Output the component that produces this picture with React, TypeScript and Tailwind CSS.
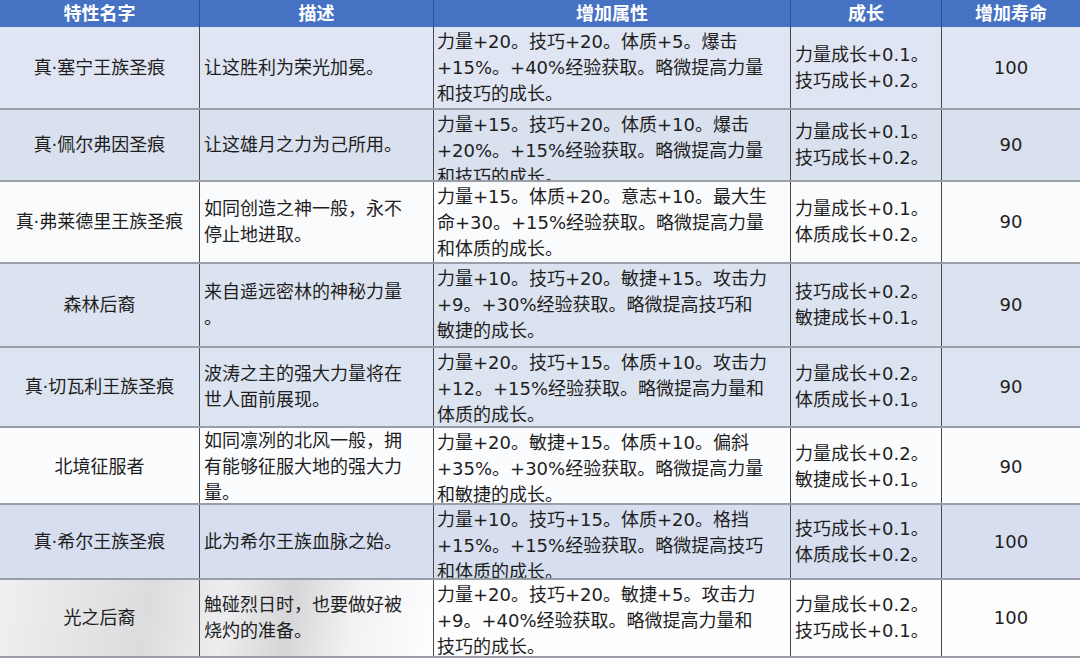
import React from 'react';

const rows = [
  {
    name: '真·塞宁王族圣痕',
    desc: ['让这胜利为荣光加冕。'],
    attrs: ['力量+20。技巧+20。体质+5。爆击', '+15%。+40%经验获取。略微提高力量', '和技巧的成长。'],
    growth: ['力量成长+0.1。', '技巧成长+0.2。'],
    life: '100',
    bg: 'bg-[#dfe5f2]',
    h: 'h-[83px]',
  },
  {
    name: '真·佩尔弗因圣痕',
    desc: ['让这雄月之力为己所用。'],
    attrs: ['力量+15。技巧+20。体质+10。爆击', '+20%。+15%经验获取。略微提高力量', '和技巧的成长。'],
    growth: ['力量成长+0.1。', '技巧成长+0.2。'],
    life: '90',
    bg: 'bg-[#d9e0ee]',
    h: 'h-[72px]',
  },
  {
    name: '真·弗莱德里王族圣痕',
    desc: ['如同创造之神一般，永不', '停止地进取。'],
    attrs: ['力量+15。体质+20。意志+10。最大生', '命+30。+15%经验获取。略微提高力量', '和体质的成长。'],
    growth: ['力量成长+0.1。', '体质成长+0.2。'],
    life: '90',
    bg: 'bg-[#fafbfd]',
    h: 'h-[82px]',
  },
  {
    name: '森林后裔',
    desc: ['来自遥远密林的神秘力量', '。'],
    attrs: ['力量+10。技巧+20。敏捷+15。攻击力', '+9。+30%经验获取。略微提高技巧和', '敏捷的成长。'],
    growth: ['技巧成长+0.2。', '敏捷成长+0.1。'],
    life: '90',
    bg: 'bg-[#dce3f0]',
    h: 'h-[84px]',
  },
  {
    name: '真·切瓦利王族圣痕',
    desc: ['波涛之主的强大力量将在', '世人面前展现。'],
    attrs: ['力量+20。技巧+15。体质+10。攻击力', '+12。+15%经验获取。略微提高力量和', '体质的成长。'],
    growth: ['力量成长+0.2。', '体质成长+0.1。'],
    life: '90',
    bg: 'bg-[#dde4f1]',
    h: 'h-[80px]',
  },
  {
    name: '北境征服者',
    desc: ['如同凛冽的北风一般，拥', '有能够征服大地的强大力', '量。'],
    attrs: ['力量+20。敏捷+15。体质+10。偏斜', '+35%。+30%经验获取。略微提高力量', '和敏捷的成长。'],
    growth: ['力量成长+0.2。', '敏捷成长+0.1。'],
    life: '90',
    bg: 'bg-[#fbfcfe]',
    h: 'h-[77px]',
  },
  {
    name: '真·希尔王族圣痕',
    desc: ['此为希尔王族血脉之始。'],
    attrs: ['力量+10。技巧+15。体质+20。格挡', '+15%。+15%经验获取。略微提高技巧', '和体质的成长。'],
    growth: ['技巧成长+0.1。', '体质成长+0.2。'],
    life: '100',
    bg: 'bg-[#d6deef]',
    h: 'h-[75px]',
  },
  {
    name: '光之后裔',
    desc: ['触碰烈日时，也要做好被', '烧灼的准备。'],
    attrs: ['力量+20。技巧+20。敏捷+5。攻击力', '+9。+40%经验获取。略微提高力量和', '技巧的成长。'],
    growth: ['力量成长+0.2。', '技巧成长+0.1。'],
    life: '100',
    bg: 'bg-[linear-gradient(100deg,#f0f0f2_0%,#dcdcde_14%,#eeeef0_21%,#d6d6d8_27%,#f2f2f4_33%,#fdfdfe_40%)]',
    h: 'h-[78px]',
  },
];

const cols = 'grid grid-cols-[200px_234px_357px_151px_138px]';

const App = () => {
  return (
    <div className="w-[1080px] h-[658px] overflow-hidden bg-white text-[#1e1e1e] font-['DejaVu_Sans','Noto_Sans_CJK_SC',sans-serif] text-[18px] leading-[26px]">
      <div className={`${cols} h-[27px] bg-[#4672c4] text-white font-bold`}>
        <div className="flex items-center justify-center border-r border-[#2f4f8f]">特性名字</div>
        <div className="flex items-center justify-center border-r border-[#2f4f8f]">描述</div>
        <div className="flex items-center justify-center border-r border-[#2f4f8f]">增加属性</div>
        <div className="flex items-center justify-center border-r border-[#2f4f8f]">成长</div>
        <div className="flex items-center justify-center">增加寿命</div>
      </div>

      {rows.map((row, index) => (
        <div
          key={index}
          className={`${cols} ${row.h} ${row.bg} border-b-2 border-[#9a9ea6] overflow-hidden`}
        >
          <div className="flex items-center justify-center border-r border-[#4a4a4a]">{row.name}</div>
          <div className="flex flex-col justify-center pl-[4px] border-r border-[#4a4a4a]">
            {row.desc.map((line, i) => (
              <div key={i} className="whitespace-nowrap">{line}</div>
            ))}
          </div>
          <div className="flex flex-col pl-[3px] pt-[2px] border-r border-[#4a4a4a] overflow-hidden">
            {row.attrs.map((line, i) => (
              <div key={i} className="whitespace-nowrap">{line}</div>
            ))}
          </div>
          <div className="flex flex-col justify-center pl-[4px] border-r border-[#4a4a4a]">
            {row.growth.map((line, i) => (
              <div key={i} className="whitespace-nowrap">{line}</div>
            ))}
          </div>
          <div className="flex items-center justify-center">{row.life}</div>
        </div>
      ))}
    </div>
  );
};

export default App;
